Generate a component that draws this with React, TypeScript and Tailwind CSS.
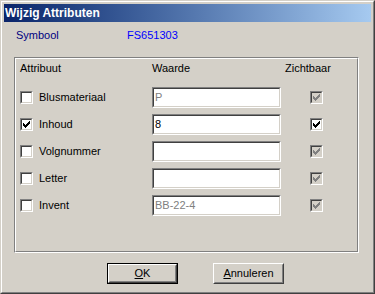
import React from "react";

const font = { fontFamily: '"Liberation Sans", Arial, sans-serif' };

function Check({ color }: { color: string }) {
  const px = [
    [6, 0],
    [5, 1], [6, 1],
    [0, 2], [4, 2], [5, 2], [6, 2],
    [0, 3], [1, 3], [3, 3], [4, 3], [5, 3],
    [0, 4], [1, 4], [2, 4], [3, 4], [4, 4],
    [1, 5], [2, 5], [3, 5],
    [2, 6],
  ];
  return (
    <svg width="7" height="7" viewBox="0 0 7 7" shapeRendering="crispEdges">
      {px.map(([x, y]) => (
        <rect key={`${x}-${y}`} x={x} y={y} width="1" height="1" fill={color} />
      ))}
    </svg>
  );
}

function CheckBox({ checked, disabled }: { checked?: boolean; disabled?: boolean }) {
  return (
    <div className="w-[13px] h-[13px] border border-t-[#808080] border-l-[#808080] border-r-white border-b-white shrink-0">
      <div
        className={`w-full h-full border border-t-[#404040] border-l-[#404040] border-r-[#d4d0c8] border-b-[#d4d0c8] flex items-center justify-center ${
          disabled ? "bg-[#d4d0c8]" : "bg-white"
        }`}
      >
        {checked && <Check color={disabled ? "#808080" : "#000000"} />}
      </div>
    </div>
  );
}

function Edit({ value, disabled }: { value: string; disabled?: boolean }) {
  return (
    <div className="w-[129px] h-[21px] border border-t-[#808080] border-l-[#808080] border-r-white border-b-white">
      <div className="w-full h-full border border-t-[#404040] border-l-[#404040] border-r-[#d4d0c8] border-b-[#d4d0c8] bg-white flex items-center pl-[1px]">
        <span className={`text-[11px] leading-[13px] ${disabled ? "text-[#808080]" : "text-black"}`}>{value}</span>
      </div>
    </div>
  );
}

const rows = [
  { label: "Blusmateriaal", value: "P", checked: false, disabled: true, visible: true, visDisabled: true },
  { label: "Inhoud", value: "8", checked: true, disabled: false, visible: true, visDisabled: false },
  { label: "Volgnummer", value: "", checked: false, disabled: false, visible: true, visDisabled: true },
  { label: "Letter", value: "", checked: false, disabled: false, visible: true, visDisabled: true },
  { label: "Invent", value: "BB-22-4", checked: false, disabled: true, visible: true, visDisabled: true },
];

function Button({ children, isDefault }: { children: React.ReactNode; isDefault?: boolean }) {
  return (
    <div className={`w-[71px] h-[21px] ${isDefault ? "border border-black" : ""}`}>
      <div className="w-full h-full border border-t-white border-l-white border-r-[#404040] border-b-[#404040]">
        <div className="w-full h-full border border-t-[#d4d0c8] border-l-[#d4d0c8] border-r-[#808080] border-b-[#808080] flex items-center justify-center text-[11px] text-black">
          {children}
        </div>
      </div>
    </div>
  );
}

export default function App() {
  return (
    <div className="w-[375px] h-[294px] bg-[#d4d0c8] select-none" style={font}>
      <div className="w-full h-full border border-t-[#d4d0c8] border-l-[#d4d0c8] border-r-[#404040] border-b-[#404040]">
        <div className="w-full h-full border border-t-white border-l-white border-r-[#808080] border-b-[#808080] p-[2px] flex flex-col">
          <div className="h-[18px] bg-gradient-to-r from-[#0a246a] to-[#a6caf0] flex items-center pl-[1px]">
            <span className="text-white font-bold text-[12px]">Wijzig Attributen</span>
          </div>
          <div className="flex flex-col pl-[10px]">
            <div className="flex mt-[7px] h-[13px] text-[11px] leading-[13px] pl-[2px]">
              <span className="w-[111px] text-[#000080]">Symbool</span>
              <span className="text-[#0000ff]">FS651303</span>
            </div>
            <div className="mt-[15px] w-[345px] h-[196px] border border-t-[#808080] border-l-[#808080] border-r-white border-b-white">
              <div className="w-full h-full border border-t-white border-l-white border-r-[#808080] border-b-[#808080] pl-[4px] pt-[3px] text-[11px] leading-[13px] text-black">
                <div className="flex h-[13px]">
                  <span className="w-[132px]">Attribuut</span>
                  <span className="w-[133px]">Waarde</span>
                  <span>Zichtbaar</span>
                </div>
                <div className="flex flex-col gap-[6px] mt-[12px]">
                  {rows.map((r) => (
                    <div key={r.label} className="flex items-center h-[21px]">
                      <div className="w-[132px] flex items-center">
                        <CheckBox checked={r.checked} />
                        <span className="ml-[6px]">{r.label}</span>
                      </div>
                      <Edit value={r.value} disabled={r.disabled} />
                      <div className="ml-[29px]">
                        <CheckBox checked={r.visible} disabled={r.visDisabled} />
                      </div>
                    </div>
                  ))}
                </div>
              </div>
            </div>
            <div className="flex mt-[10px] pl-[93px] gap-[35px]">
              <Button isDefault>
                <span><span className="underline">O</span>K</span>
              </Button>
              <Button>
                <span><span className="underline">A</span>nnuleren</span>
              </Button>
            </div>
          </div>
        </div>
      </div>
    </div>
  );
}
